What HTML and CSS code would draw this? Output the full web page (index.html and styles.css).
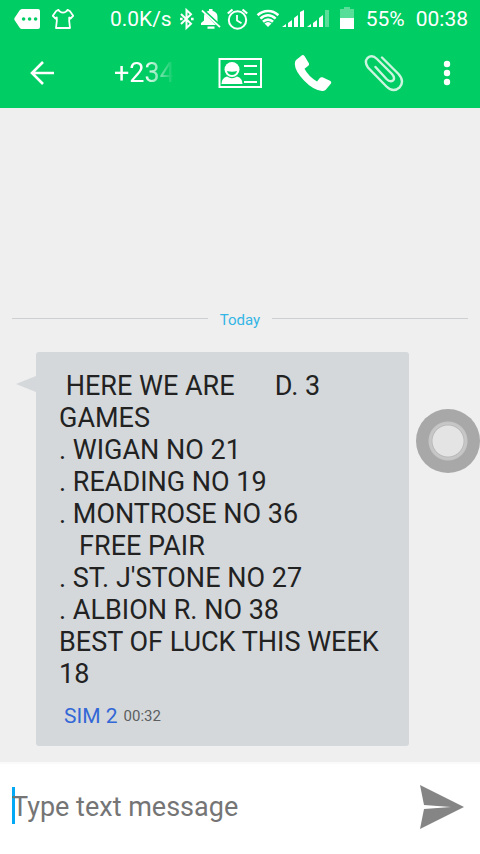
FILE: index.html
```html
<!DOCTYPE html>
<html lang="en">
<head>
<meta charset="utf-8">
<meta name="viewport" content="width=device-width, initial-scale=1">
<title>Messages</title>
<link rel="stylesheet" href="styles.css">
</head>
<body>
<div class="app">
  <header class="header">
    <div class="status-bar">
      <div class="status-notifications">
        <svg width="26" height="20" viewBox="0 0 26 20"><path fill="#fff" fill-rule="evenodd" d="M8 0H24Q26 0 26 2V18Q26 20 24 20H8Q6.500 20 5.500 18.500L0.500 11Q0 10 .5 9L5.500 1.500Q6.500 0 8 0ZM9.600 8.200a1.800 1.800 0 1 0 0 3.600a1.800 1.800 0 1 0 0-3.600ZM15.600 8.200a1.800 1.800 0 1 0 0 3.600a1.800 1.800 0 1 0 0-3.600ZM21.600 8.200a1.800 1.800 0 1 0 0 3.600a1.800 1.800 0 1 0 0-3.600Z"/></svg>
        <svg width="22" height="20" viewBox="0 0 22 20"><path fill="none" stroke="#fff" stroke-width="1.800" stroke-linejoin="round" d="M6.500 .9Q8 3.600 11 3.600T15.500 .9L17.800 2L21.200 6.800L18.500 9.500L17.200 8.500V12L18 19H4L4.800 12V8.500L3.500 9.500L.8 6.800L4.200 2Z"/></svg>
      </div>
      <div class="status-info">
        <span>0.0K/s</span>
        <svg width="21" height="24" viewBox="0 0 21 24"><path fill="none" stroke="#fff" stroke-width="2" d="M6 7L16 16.800L11.500 21V3L16 7.200L6 17"/><path fill="#fff" d="M5 10.700h2.600v2.600H5zM16 10.700h2.600v2.600H16z"/></svg>
        <svg width="24" height="24" viewBox="0 0 24 24"><path fill="#fff" d="M5.600 6.800L17 18H2v-2l3-2.500V10Q5 8.200 5.600 6.800ZM7 5Q8.500 4 10 3.700V2h3.500v1.700Q18.500 5 18.500 10v5.700ZM8.500 19.500h7v2.300h-7z"/><path fill="none" stroke="#fff" stroke-width="1.800" d="M3 3.500L21 20"/><path fill="none" stroke="#00cd63" stroke-width="1.200" d="M4.500 2.500L21.500 18.200"/></svg>
        <svg width="24" height="24" viewBox="0 0 24 24"><g fill="none" stroke="#fff"><circle cx="11.500" cy="13" r="8.700" stroke-width="2"/><path stroke-width="1.800" d="M11 8v5.500l4.500 2.800"/><path stroke-width="2.200" d="M1.800 6.500L6.500 2.500M16.500 2.500L21.200 6.500"/></g></svg>
        <svg width="26" height="24" viewBox="0 0 26 24"><g fill="none" stroke="#fff" stroke-width="2.600"><path d="M4.600 8.200Q9 4 15 4T25.400 8.200"/><path d="M7.400 11.600Q11 8.200 15 8.200T22.600 11.600"/><path d="M10 14.800Q12.300 12.600 15 12.600T20 14.800"/></g><path fill="#fff" d="M11.500 16.500Q15 13.500 18.500 16.500L15 20Z"/></svg>
        <svg width="22" height="24" viewBox="0 0 22 24"><path fill="#fff" d="M0 20l4-3v3zM6 16l4-3v7H6zM12 11l4-3v12h-4zM18 5l4-2v17h-4z"/></svg>
        <svg width="22" height="24" viewBox="0 0 22 24"><path fill="#fff" d="M0 20l4-3v3zM6 16l4-3v7H6zM12 11l4-3v12h-4z"/><path fill="#fff" opacity=".35" d="M18 3h4v17h-4z"/></svg>
        <svg width="31" height="24" viewBox="0 0 31 24"><path fill="#fff" opacity=".35" d="M12 0h6v2h4v9H8V2h4z"/><path fill="#fff" d="M8 11h14v11H8z"/></svg>
        <span>55%</span>
        <time class="clock">00:38</time>
      </div>
    </div>
    <nav class="toolbar">
      <button class="tool" aria-label="Back"><svg width="26" height="26" viewBox="0 0 26 26"><path fill="none" stroke="#fff" stroke-width="2.600" d="M25 13H3M14 2L3 13L14 24"/></svg></button>
      <h1 class="contact">+234</h1>
      <button class="tool" aria-label="Contact"><svg width="44" height="30" viewBox="0 0 44 30"><path fill="none" stroke="#fff" stroke-width="2" d="M1.500 1H43V29H1.500z"/><path fill="#fff" d="M3.500 26Q3.500 20 9 18.500Q14 22 19 18.500Q24.500 20 24.500 26z"/><circle cx="14" cy="11.500" r="7.500" fill="#fff"/><path fill="#00cd63" d="M9 13Q14 14.500 19 13Q18 17 14 17T9 13Z"/><path stroke="#fff" stroke-width="2" d="M26 8H39M26 16H39M26 24H39"/></svg></button>
      <button class="tool" aria-label="Call"><svg width="38" height="38" viewBox="0 0 38 38"><path fill="#fff" d="M2 6L8 1.200Q9.500 .5 10.500 2L15 9.500Q15.500 10.800 14.300 11.800L10.500 14.800Q14.500 22.500 23 27.500L26 23.800Q27 22.800 28.500 23.300L36.500 27Q37.800 28 37 29.500L31.500 36Q30 37.200 28 37Q19 36 10 26.500T.8 10Q.8 7.500 2 6Z"/></svg></button>
      <button class="tool" aria-label="Attach"><svg width="40" height="40" viewBox="0 0 40 40"><path fill="none" stroke="#ccf5df" stroke-width="2.400" stroke-linecap="round" d="M18 4.500L34.500 21Q41 28 35.500 34.500Q29 40 22.500 33.500L4 14.500Q0 9 3.500 5Q8 1 13 6L28 21Q31.500 25 29 27.500Q26 29.500 22.500 26L11.500 14"/></svg></button>
      <button class="tool tool-more" aria-label="More options"><svg width="8" height="26" viewBox="0 0 8 26"><g fill="#fff"><circle cx="4" cy="4" r="3.200"/><circle cx="4" cy="13" r="3.200"/><circle cx="4" cy="22" r="3.200"/></g></svg></button>
    </nav>
  </header>

  <main class="conversation">
    <div class="day">Today</div>
    <article class="bubble">
      <p class="bubble-text"> HERE WE ARE      D. 3 GAMES
. WIGAN NO 21
. READING NO 19
. MONTROSE NO 36
   FREE PAIR
. ST. J'STONE NO 27
. ALBION R. NO 38
BEST OF LUCK THIS WEEK 18</p>
      <footer class="bubble-meta"><span class="sim">SIM 2</span><time>00:32</time></footer>
    </article>
  </main>

  <form class="composer">
    <span class="caret"></span>
    <input class="message-input" type="text" aria-label="Message" placeholder="Type text message">
    <button class="send" type="button" aria-label="Send"><svg width="44" height="44" viewBox="0 0 44 44"><path fill="#858585" d="M0 0L44 22L0 44L4 24L31 22L4 20Z"/></svg></button>
  </form>

  <button class="assist" aria-label="Quick actions"></button>
</div>
</body>
</html>
```

FILE: styles.css
```css
* {
  box-sizing: border-box;
}

body {
  margin: 0;
  font-family: Roboto, "Liberation Sans", sans-serif;
  color: #222;
  background: #efefef;
}

button {
  padding: 0;
  border: 0;
  background: none;
}

svg {
  display: block;
  flex: none;
}

.app {
  position: relative;
  display: flex;
  flex-direction: column;
  min-height: 100vh;
}

.header {
  color: #fff;
  background: #00cd63;
}

.status-bar {
  display: flex;
  align-items: center;
  justify-content: space-between;
  height: 38px;
  padding: 0 12px 0 14px;
  font-size: 21px;
  line-height: 24px;
}

.status-notifications {
  display: flex;
  gap: 12px;
}

.status-info {
  display: flex;
  align-items: center;
  gap: 3px;
}

.clock {
  margin-left: 8px;
}

.toolbar {
  display: flex;
  align-items: center;
  height: 70px;
  padding: 0 29px;
  gap: 32px;
}

.tool {
  display: flex;
  align-items: center;
}

.tool-more {
  margin-left: 7px;
}

.contact {
  flex: 1;
  margin: 0 12px 0 27px;
  overflow: hidden;
  font-size: 27px;
  font-weight: 400;
  line-height: 32px;
  -webkit-mask-image: linear-gradient(to right, #000 50%, transparent);
  mask-image: linear-gradient(to right, #000 50%, transparent);
}

.conversation {
  display: flex;
  flex: 1;
  flex-direction: column;
  justify-content: flex-end;
  padding: 0 12px 16px;
}

.day {
  display: flex;
  align-items: center;
  gap: 12px;
  margin-bottom: 22px;
  font-size: 15px;
  line-height: 20px;
  color: #33b5e5;
}

.day::before,
.day::after {
  content: "";
  flex: 1;
  height: 1px;
  margin-bottom: 3px;
  background: #cdcfd0;
}

.bubble {
  position: relative;
  margin: 0 59px 0 24px;
  padding: 18px 23px 14px;
  border-radius: 3px;
  background: #d4d8db;
}

.bubble::before {
  content: "";
  position: absolute;
  top: 24px;
  left: -20px;
  width: 20px;
  height: 16px;
  background: inherit;
  clip-path: polygon(0 50%, 100% 0, 100% 100%);
}

.bubble-text {
  margin: 0;
  font-size: 27px;
  line-height: 32px;
  white-space: pre-wrap;
}

.bubble-meta {
  display: flex;
  align-items: center;
  gap: 6px;
  margin-top: 10px;
  padding-left: 5px;
  font-size: 15px;
  line-height: 32px;
  color: #5c5e60;
}

.sim {
  font-size: 21px;
  color: #3367d6;
}

.composer {
  position: relative;
  display: flex;
  align-items: center;
  height: 92px;
  padding: 0 16px 4px 12px;
  border-top: 2px solid #fafafa;
  background: #fff;
}

.caret {
  position: absolute;
  top: 23px;
  left: 12px;
  width: 3px;
  height: 37px;
  background: #03a9f4;
}

.message-input {
  position: relative;
  flex: 1;
  min-width: 0;
  height: 48px;
  padding: 0;
  border: 0;
  outline: 0;
  background: transparent;
  font: inherit;
  font-size: 27px;
}

.message-input::placeholder {
  color: #757575;
  opacity: 1;
}

.assist {
  position: absolute;
  top: 409px;
  right: 0;
  width: 64px;
  height: 64px;
  border-radius: 50%;
  background: radial-gradient(circle, #e4e4e4 15px, #b9b9b9 16px, #c8c8c8 17px, #c4c4c4 19px, #a8a8a8 20px);
}
```
